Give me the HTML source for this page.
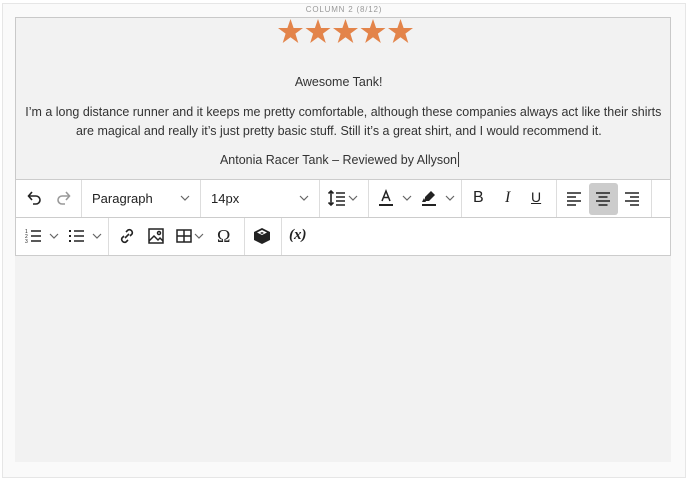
<!DOCTYPE html>
<html><head><meta charset="utf-8">
<style>
*{box-sizing:border-box;margin:0;padding:0}
body{width:688px;height:486px;background:#fff;position:relative;overflow:hidden;font-family:"Liberation Sans",sans-serif}
.outer{position:absolute;left:2px;top:3px;width:684px;height:475px;background:#fafafa;border:1px solid #e6e6e6}
.lbl{position:absolute;left:0;width:688px;top:5px;text-align:center;font-size:8px;letter-spacing:.8px;color:#999}
.gray{position:absolute;left:15px;top:17px;width:656px;height:445px;background:#f2f2f2}
.content{position:absolute;left:15px;top:17px;width:656px;height:163px;border:1px solid #c9c9c9;border-bottom:none;text-align:center;color:#333;font-family:"Liberation Sans",sans-serif;font-size:13px}
.stars{position:absolute;left:261px;top:0}
.ln{position:absolute;left:-4px;width:100%;white-space:nowrap;text-align:center}
.ln span{display:inline-block;transform:scaleX(0.96);transform-origin:center}
.tb{position:absolute;left:15px;width:656px;background:#fff;border:1px solid #ccc}
.r1{top:179px;height:39px}
.r2{top:217px;height:39px}
.sep{position:absolute;top:0;bottom:0;width:1px;background:#ddd}
.ic{position:absolute;top:8px}
.txt{position:absolute;top:11px;font-size:13px;color:#222}
.chev{position:absolute;top:14px}
</style></head><body>
<div class="outer"></div>
<div class="lbl">COLUMN 2 (8/12)</div>
<div class="gray"></div>
<div class="content">
<svg class="stars" width="140" height="28" viewBox="0 0 140 28">
<defs><polygon id="s" points="13.5,1 16.6,10 26,10 18.4,15.6 21.3,25 13.5,19.3 5.7,25 8.6,15.6 1,10 10.4,10" fill="#e3844a"/></defs>
<use href="#s" x="0"/><use href="#s" x="27.5"/><use href="#s" x="55"/><use href="#s" x="82.5"/><use href="#s" x="110"/>
</svg>
<div class="ln" style="top:56px"><span>Awesome Tank!</span></div>
<div class="ln" style="top:86px"><span>I’m a long distance runner and it keeps me pretty comfortable, although these companies always act like their shirts</span></div>
<div class="ln" style="top:105px"><span>are magical and really it’s just pretty basic stuff. Still it’s a great shirt, and I would recommend it.</span></div>
<div class="ln" style="top:134px"><span>Antonia Racer Tank – Reviewed by Allyson<i style="border-left:1px solid #333;margin-left:1px"></i></span></div>
</div>

<div class="tb r1">
<svg class="ic" style="left:8px" width="20" height="20" viewBox="0 0 20 20" fill="none" stroke="#222" stroke-width="1.6"><path d="M5 8h7a4 4 0 010 8H9"/><path d="M8 4L4.5 8 8 12"/></svg>
<svg class="ic" style="left:38px" width="20" height="20" viewBox="0 0 20 20" fill="none" stroke="#999" stroke-width="1.6"><path d="M15 8H8a4 4 0 000 8h3"/><path d="M12 4l3.5 4-3.5 4"/></svg>
<div class="sep" style="left:65px"></div>
<div class="txt" style="left:76px">Paragraph</div>
<svg class="chev" style="left:164px" width="10" height="8" viewBox="0 0 10 8" fill="none" stroke="#666" stroke-width="1.2"><path d="M1 2l4 4 4-4"/></svg>
<div class="sep" style="left:184px"></div>
<div class="txt" style="left:195px">14px</div>
<svg class="chev" style="left:283px" width="10" height="8" viewBox="0 0 10 8" fill="none" stroke="#666" stroke-width="1.2"><path d="M1 2l4 4 4-4"/></svg>
<div class="sep" style="left:303px"></div>
<svg class="ic" style="left:311px" width="20" height="20" viewBox="0 0 20 20" fill="none" stroke="#222" stroke-width="1.6"><path d="M4 3v14M1.5 5.5L4 3l2.5 2.5M1.5 14.5L4 17l2.5-2.5M9 5h9M9 9h9M9 13h9M9 17h9"/></svg>
<svg class="chev" style="left:332px" width="10" height="8" viewBox="0 0 10 8" fill="none" stroke="#666" stroke-width="1.2"><path d="M1 2l4 4 4-4"/></svg>
<div class="sep" style="left:352px"></div>
<svg class="ic" style="left:360px" width="20" height="20" viewBox="0 0 20 20" fill="none" stroke="#222" stroke-width="1.5"><path d="M6 13L10 3l4 10M7.4 9.5h5.2"/><rect x="3" y="16" width="14" height="2" fill="#222" stroke="none"/></svg>
<svg class="chev" style="left:386px" width="10" height="8" viewBox="0 0 10 8" fill="none" stroke="#666" stroke-width="1.2"><path d="M1 2l4 4 4-4"/></svg>
<svg class="ic" style="left:403px" width="20" height="20" viewBox="0 0 20 20"><path d="M12 3l4 4-6 6H6v-4z" fill="#222"/><path d="M5 10l-2 4h4z" fill="#222"/><rect x="3" y="16" width="14" height="2" fill="#222"/></svg>
<svg class="chev" style="left:429px" width="10" height="8" viewBox="0 0 10 8" fill="none" stroke="#666" stroke-width="1.2"><path d="M1 2l4 4 4-4"/></svg>
<div class="sep" style="left:445px"></div>
<div class="txt" style="left:457px;font-size:16px;top:9px">B</div>
<div class="txt" style="left:489px;font-size:16px;top:9px;font-family:'Liberation Serif',serif;font-style:italic">I</div>
<div class="txt" style="left:515px;font-size:14px;top:9px;text-decoration:underline">U</div>
<div class="sep" style="left:540px"></div>
<div style="position:absolute;left:573px;top:3px;width:29px;height:32px;background:#ccc;border-radius:3px"></div>
<svg class="ic" style="left:548px" width="20" height="20" viewBox="0 0 20 20" stroke="#222" stroke-width="1.6"><path d="M3 5h14M3 9h9M3 13h14M3 17h9"/></svg>
<svg class="ic" style="left:577px" width="20" height="20" viewBox="0 0 20 20" stroke="#222" stroke-width="1.6"><path d="M3 5h14M5.5 9h9M3 13h14M5.5 17h9"/></svg>
<svg class="ic" style="left:606px" width="20" height="20" viewBox="0 0 20 20" stroke="#222" stroke-width="1.6"><path d="M3 5h14M8 9h9M3 13h14M8 17h9"/></svg>
<div class="sep" style="left:635px"></div>
</div>

<div class="tb r2">
<svg class="ic" style="left:8px" width="20" height="20" viewBox="0 0 20 20" stroke="#222" stroke-width="1.5"><path d="M7 5h10M7 10h10M7 15h10"/><text x="1" y="7" font-size="5" fill="#222" stroke="none">1</text><text x="1" y="12" font-size="5" fill="#222" stroke="none">2</text><text x="1" y="17" font-size="5" fill="#222" stroke="none">3</text></svg>
<svg class="chev" style="left:33px" width="10" height="8" viewBox="0 0 10 8" fill="none" stroke="#666" stroke-width="1.2"><path d="M1 2l4 4 4-4"/></svg>
<svg class="ic" style="left:51px" width="20" height="20" viewBox="0 0 20 20" stroke="#222" stroke-width="1.5"><path d="M7 5h10M7 10h10M7 15h10"/><path d="M2 5h2M2 10h2M2 15h2" stroke-width="2"/></svg>
<svg class="chev" style="left:76px" width="10" height="8" viewBox="0 0 10 8" fill="none" stroke="#666" stroke-width="1.2"><path d="M1 2l4 4 4-4"/></svg>
<div class="sep" style="left:92px"></div>
<svg class="ic" style="left:101px" width="20" height="20" viewBox="0 0 20 20" fill="none" stroke="#222" stroke-width="1.6"><path d="M9 6l2-2a3 3 0 014 4l-2 2M11 14l-2 2a3 3 0 01-4-4l2-2M8 12l4-4"/></svg>
<svg class="ic" style="left:130px" width="20" height="20" viewBox="0 0 20 20" fill="none" stroke="#222" stroke-width="1.5"><rect x="3" y="3" width="14" height="14"/><path d="M3 15l5-5 4 4 2-2 3 3"/><circle cx="13" cy="7" r="1.5"/></svg>
<svg class="ic" style="left:158px" width="20" height="20" viewBox="0 0 20 20" fill="none" stroke="#222" stroke-width="1.5"><rect x="3" y="4" width="14" height="12"/><path d="M3 10h14M10 4v12"/></svg>
<svg class="chev" style="left:178px" width="10" height="8" viewBox="0 0 10 8" fill="none" stroke="#666" stroke-width="1.2"><path d="M1 2l4 4 4-4"/></svg>
<div class="txt" style="left:201px;font-size:18px;top:8px;font-family:'Liberation Serif',serif">Ω</div>
<div class="sep" style="left:228px"></div>
<svg class="ic" style="left:236px" width="20" height="20" viewBox="0 0 20 20"><path d="M10 2l8 4v8l-8 4-8-4V6z" fill="#222"/><path d="M10 4l5 2.5-5 2.5-5-2.5z" fill="#fff"/><path d="M10 6l2 1-2 1-2-1z" fill="#222"/></svg>
<div class="sep" style="left:265px"></div>
<div class="txt" style="left:273px;font-size:15px;top:9px;font-family:'Liberation Serif',serif;font-style:italic;font-weight:bold">(x)</div>
</div>
</body></html>
